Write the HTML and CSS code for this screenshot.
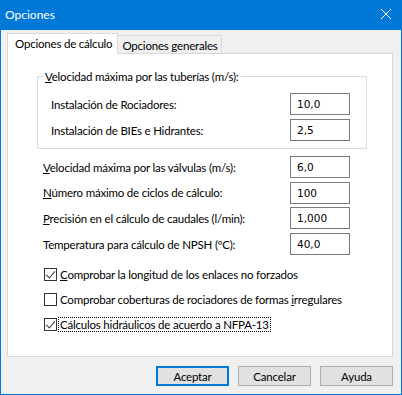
FILE: index.html
```html
<!DOCTYPE html>
<html lang="es">
<head>
    <meta charset="UTF-8">
    <title>Opciones</title>
    <link rel="stylesheet" href="styles.css">
</head>
<body>
    <div class="window">
        <div class="titlebar">
            <span class="title">Opciones</span>
            <svg class="close" width="10" height="10" viewBox="0 0 10 10">
                <path d="M0 0L10 10M10 0L0 10" stroke="#fff" stroke-width="1" fill="none"/>
            </svg>
        </div>
        <div class="client">
            <div class="tabs">
                <div class="tab active">Opciones de cálculo</div>
                <div class="tab">Opciones generales</div>
            </div>
            <div class="panel">
                <fieldset class="group">
                    <legend><u>V</u>elocidad máxima por las tuberías (m/s):</legend>
                    <div class="row">
                        <span>Instalación de Rociadores:</span>
                        <div class="field">10,0</div>
                    </div>
                    <div class="row">
                        <span>Instalación de BIEs e Hidrantes:</span>
                        <div class="field">2,5</div>
                    </div>
                </fieldset>

                <div class="rows">
                    <div class="row">
                        <span><u>V</u>elocidad máxima por las válvulas (m/s):</span>
                        <div class="field">6,0</div>
                    </div>
                    <div class="row">
                        <span><u>N</u>úmero máximo de ciclos de cálculo:</span>
                        <div class="field">100</div>
                    </div>
                    <div class="row">
                        <span><u>P</u>recisión en el cálculo de caudales (l/min):</span>
                        <div class="field">1,000</div>
                    </div>
                    <div class="row">
                        <span>Temperatura para cálculo de NPSH (ºC):</span>
                        <div class="field">40,0</div>
                    </div>
                </div>

                <div class="checks">
                    <div class="check">
                        <span class="box on"></span>
                        <span><u>C</u>omprobar la longitud de los enlaces no forzados</span>
                    </div>
                    <div class="check">
                        <span class="box"></span>
                        <span>Comprobar coberturas de rociadores de formas <u>i</u>rregulares</span>
                    </div>
                    <div class="check">
                        <span class="box on"></span>
                        <span class="focus">Cálculos hidráulicos de acuerdo a NFPA-13</span>
                    </div>
                </div>
            </div>
            <div class="buttons">
                <button class="btn default">Aceptar</button>
                <button class="btn">Cancelar</button>
                <button class="btn">Ayuda</button>
            </div>
        </div>
    </div>
</body>
</html>
```

FILE: styles.css
```css
* {
    margin: 0;
    padding: 0;
    box-sizing: border-box;
}

body {
    font-family: Lato, "Liberation Sans", sans-serif;
    font-size: 11.5px;
    letter-spacing: -0.2px;
    color: #000;
    background-color: #fff;
}

u {
    text-decoration: underline;
    text-underline-offset: 1px;
}

/* Ventana */
.window {
    width: 402px;
    height: 395px;
    border: 1px solid #0078d7;
    border-top: none;
    background-color: #f0f0f0;
    display: flex;
    flex-direction: column;
}

.titlebar {
    height: 30px;
    margin: 0 -1px;
    background-color: #0078d7;
    color: #fff;
    display: flex;
    align-items: center;
    justify-content: space-between;
    padding: 0 11px 2px 5px;
    font-size: 12px;
    letter-spacing: 0;
}

.close {
    display: block;
}

.client {
    flex: 1;
    padding: 3px 8px 0 6px;
    display: flex;
    flex-direction: column;
}

/* Pestañas */
.tabs {
    display: flex;
    align-items: flex-end;
    height: 20px;
}

.tab {
    height: 18px;
    padding: 1px 3px 0 4px;
    border: 1px solid #d9d9d9;
    border-bottom: none;
    border-left: none;
    background-color: #f0f0f0;
    display: flex;
    align-items: center;
}

.tab.active {
    height: 21px;
    margin-bottom: -1px;
    border-left: 1px solid #d9d9d9;
    background-color: #fff;
    padding: 0 5px 2px 7px;
    position: relative;
    z-index: 1;
}

.panel {
    height: 304px;
    background-color: #fff;
    border: 1px solid #d9d9d9;
    padding: 0 25px 0 35px;
}

/* Grupo */
.group {
    margin: 15px 0 0 -6px;
    width: 330px;
    height: 80px;
    border: 1px solid #dcdcdc;
    padding: 1px 16px 0 5px;
}

.group legend {
    padding: 0 2px;
    line-height: 15px;
}

.group .row {
    padding-left: 8px;
    margin-bottom: 4px;
}

.group .row:first-of-type {
    margin-top: 8px;
}

.row {
    display: flex;
    justify-content: space-between;
    align-items: center;
}

.field {
    width: 60px;
    height: 22px;
    border: 1px solid #7a7a7a;
    background-color: #fff;
    padding: 2px 0 0 6px;
    font-family: "DejaVu Sans", sans-serif;
    font-size: 10.5px;
    letter-spacing: 0;
    line-height: 16px;
}

.rows {
    margin-top: 7px;
    width: 307px;
    display: flex;
    flex-direction: column;
    gap: 3.7px;
}

/* Casillas */
.checks {
    margin-top: 12px;
    display: flex;
    flex-direction: column;
    gap: 10px;
}

.check {
    display: flex;
    align-items: center;
    gap: 3px;
    height: 15px;
}

.box {
    width: 13px;
    height: 13px;
    margin-left: 1px;
    border: 1px solid #333;
    background-color: #fff;
    position: relative;
}

.box.on::after {
    content: "";
    position: absolute;
    left: 3px;
    top: 0px;
    width: 4px;
    height: 8px;
    border: solid #333;
    border-width: 0 1px 1px 0;
    transform: rotate(40deg);
}

.focus {
    outline: 1px dotted #000;
    outline-offset: 0;
    padding: 0 1px;
    margin-left: -1px;
}

/* Botones */
.buttons {
    display: flex;
    justify-content: flex-end;
    gap: 9px;
    margin-top: 9px;
}

.btn {
    width: 73px;
    height: 20px;
    font: inherit;
    letter-spacing: inherit;
    background-color: #e1e1e1;
    border: 1px solid #adadad;
    color: #000;
}

.btn.default {
    border: 2px solid #0078d7;
}
```
